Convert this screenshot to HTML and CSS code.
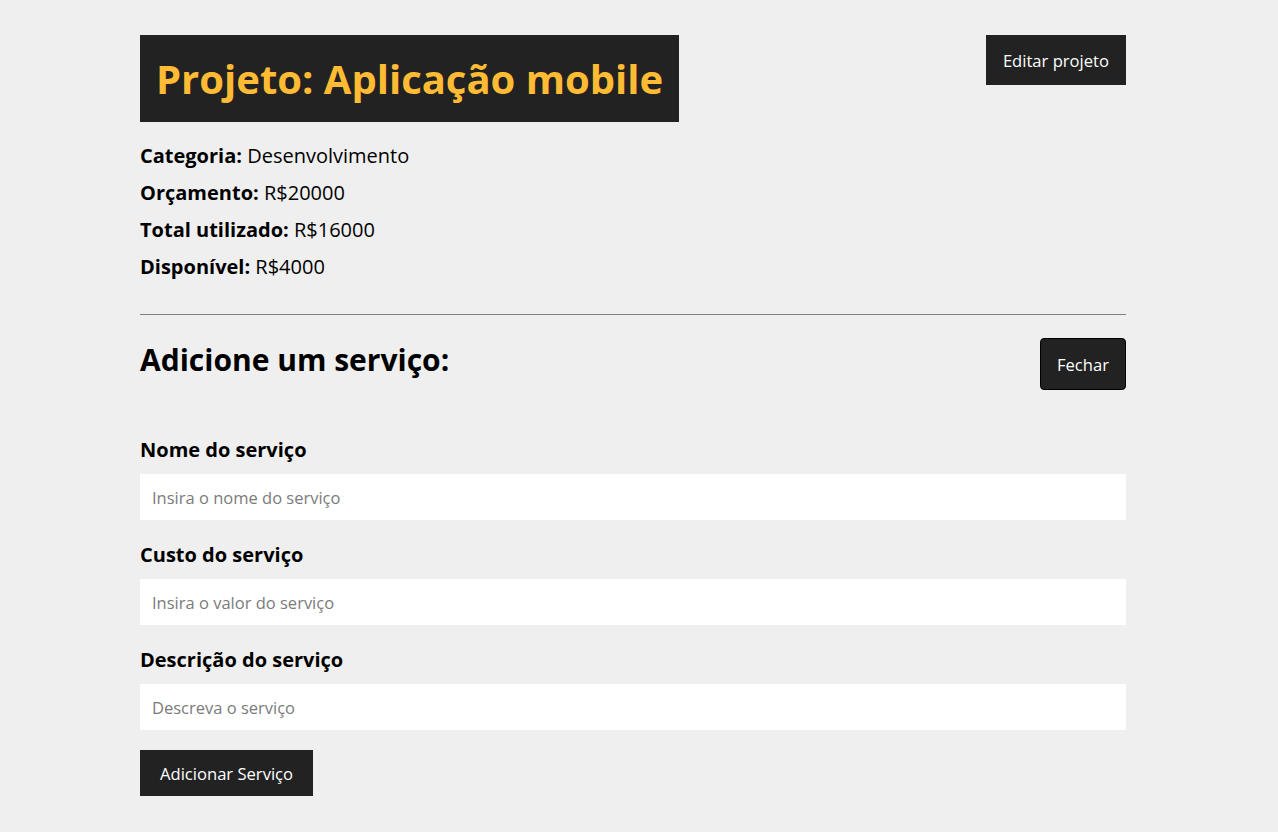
FILE: index.html
```html
<!DOCTYPE html>
<html lang="pt-BR">
<head>
<meta charset="utf-8">
<title>Projeto</title>
<link rel="stylesheet" href="styles.css">
</head>
<body>
<main class="project">
  <section class="details">
    <div class="details-head">
      <h1 class="title">Projeto: Aplicação mobile</h1>
      <button class="btn btn-edit">Editar projeto</button>
    </div>
    <div class="info">
      <p><span class="key">Categoria:</span> Desenvolvimento</p>
      <p><span class="key">Orçamento:</span> R$20000</p>
      <p><span class="key">Total utilizado:</span> R$16000</p>
      <p><span class="key">Disponível:</span> R$4000</p>
    </div>
  </section>
  <section class="service">
    <div class="service-head">
      <h2 class="service-title">Adicione um serviço:</h2>
      <button class="btn btn-close">Fechar</button>
    </div>
    <form class="form">
      <div class="field">
        <label for="name">Nome do serviço</label>
        <input id="name" type="text" placeholder="Insira o nome do serviço">
      </div>
      <div class="field">
        <label for="cost">Custo do serviço</label>
        <input id="cost" type="number" placeholder="Insira o valor do serviço">
      </div>
      <div class="field">
        <label for="desc">Descrição do serviço</label>
        <input id="desc" type="text" placeholder="Descreva o serviço">
      </div>
      <button type="button" class="btn btn-submit">Adicionar Serviço</button>
    </form>
  </section>
</main>
</body>
</html>
```
FILE: styles.css
```css
* { box-sizing: border-box; }
html, body { margin: 0; padding: 0; }
body {
  background: #efefef;
  font-family: "Open Sans", "Liberation Sans", sans-serif;
  color: #000;
  padding-right: 12px;
}
.project {
  width: 986px;
  margin: 0 auto;
  padding-top: 35px;
}
.details-head {
  display: flex;
  justify-content: space-between;
  align-items: flex-start;
}
.title {
  margin: 0;
  background: #222;
  color: #ffbb33;
  font-size: 40px;
  font-weight: 700;
  line-height: 55px;
  padding: 16px 16px;
}
.btn {
  background: #222;
  color: #fff;
  border: none;
  font-family: inherit;
  font-size: 16.6px;
  cursor: pointer;
}
.btn-edit {
  height: 50px;
  padding: 0 17px;
}
.info {
  padding-top: 21px;
  padding-bottom: 23px;
  border-bottom: 1px solid #808080;
}
.info p {
  margin: 0 0 12px;
  font-size: 20px;
  line-height: 25px;
}
.key { font-weight: 700; }
.service-head {
  display: flex;
  justify-content: space-between;
  align-items: flex-start;
  padding-top: 23px;
}
.service-title {
  margin: 0;
  font-size: 30px;
  line-height: 44px;
}
.btn-close {
  height: 52px;
  padding: 0 16px;
  border: 1px solid #000;
  border-radius: 4px;
}
.form {
  padding-top: 47px;
}
.field {
  display: flex;
  flex-direction: column;
  margin-bottom: 22px;
}
.field label {
  font-size: 20px;
  font-weight: 700;
  line-height: 25px;
  margin-bottom: 12px;
}
.field input {
  height: 46px;
  border: none;
  background: #fff;
  padding: 0 12px;
  font-family: inherit;
  font-size: 16.5px;
  outline: none;
}
.field input::placeholder { color: #7b7b7b; }
.field:last-of-type { margin-bottom: 20px; }
.btn-submit {
  height: 46px;
  padding: 0 20px;
}
```
